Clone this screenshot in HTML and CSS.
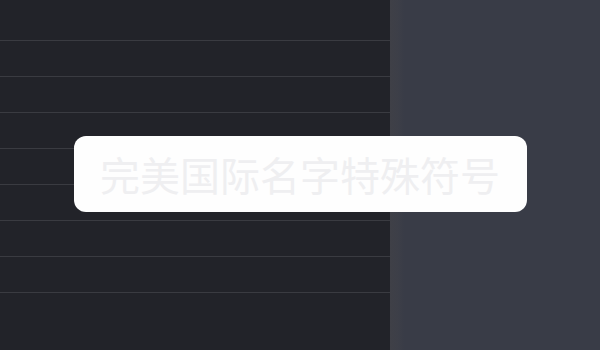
FILE: index.html
```html
<!DOCTYPE html>
<html lang="zh-CN">
<head>
  <meta charset="UTF-8">
  <meta name="viewport" content="width=device-width, initial-scale=1.0">
  <title>完美国际名字特殊符号</title>
  <link rel="stylesheet" href="styles.css">
</head>
<body>
  <div class="screen">
    <div class="list">
      <div class="row"></div>
      <div class="row"></div>
      <div class="row"></div>
      <div class="row"></div>
      <div class="row"></div>
      <div class="row"></div>
      <div class="row"></div>
      <div class="row"></div>
    </div>
    <div class="side"></div>
    <div class="toast">完美国际名字特殊符号</div>
  </div>
</body>
</html>
```

FILE: styles.css
```css
html, body {
  margin: 0;
  padding: 0;
  background-color: #222329;
}
.screen {
  position: relative;
  display: flex;
  width: 600px;
  height: 350px;
  overflow: hidden;
  font-family: "Noto Sans CJK SC", "Noto Sans", sans-serif;
}
.list {
  width: 390px;
  padding-top: 5px;
  background-color: #222329;
}
.row {
  height: 35px;
  border-bottom: 1px solid #3a3b41;
}
.side {
  flex: 1;
  background: linear-gradient(to right, #3f4047 0, #3d3f48 8px, #393c47 14px);
}
.toast {
  position: absolute;
  left: 74px;
  top: 136px;
  width: 453px;
  height: 76px;
  box-sizing: border-box;
  padding: 0 26px;
  border-radius: 12px;
  background-color: #fefefe;
  color: #efeff1;
  font-size: 40px;
  line-height: 76px;
  white-space: nowrap;
}
```
